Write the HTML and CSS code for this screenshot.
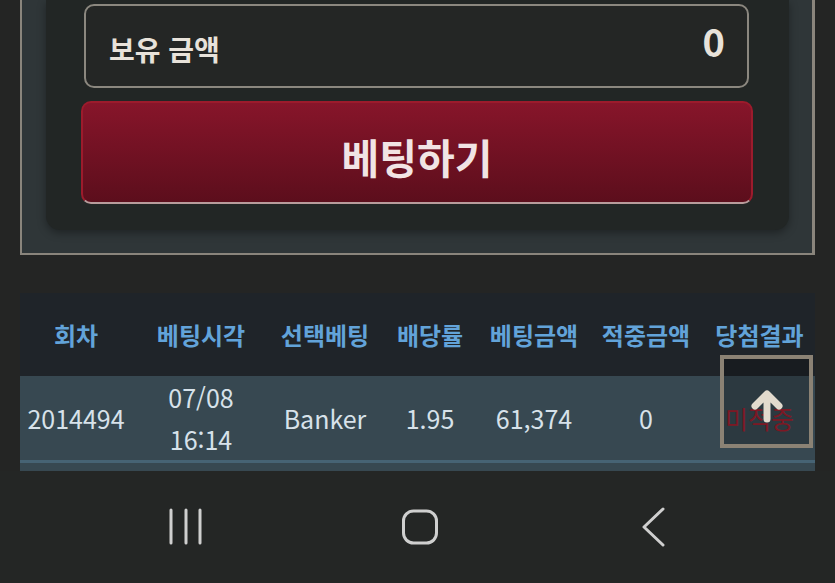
FILE: index.html
```html
<!DOCTYPE html>
<html lang="ko">
<head>
<meta charset="utf-8">
<title>베팅</title>
<link rel="stylesheet" href="styles.css">
</head>
<body>
<div class="screen">
  <main class="content">
    <section class="panel">
      <div class="card">
        <div class="balance">
          <span class="balance-label">보유 금액</span>
          <span class="balance-value">0</span>
        </div>
        <button class="bet-btn" type="button">베팅하기</button>
      </div>
    </section>

    <table class="history">
      <colgroup>
        <col class="c1"><col class="c2"><col class="c3"><col class="c4"><col class="c5"><col class="c6"><col class="c7">
      </colgroup>
      <thead>
        <tr>
          <th>회차</th><th>베팅시각</th><th>선택베팅</th><th>배당률</th><th>베팅금액</th><th>적중금액</th><th>당첨결과</th>
        </tr>
      </thead>
      <tbody>
        <tr>
          <td>2014494</td><td>07/08<br>16:14</td><td>Banker</td><td>1.95</td><td>61,374</td><td>0</td><td class="miss">미적중</td>
        </tr>
        <tr class="next-row">
          <td></td><td></td><td></td><td></td><td></td><td></td><td></td>
        </tr>
      </tbody>
    </table>

    <button class="to-top" type="button" aria-label="맨 위로">
      <svg width="40" height="40" viewBox="0 0 40 40">
        <path d="M20 35 V12 M8 22 L20 10 L32 22" fill="none" stroke="#e2dacd" stroke-width="7" stroke-linecap="round" stroke-linejoin="round"/>
      </svg>
    </button>
  </main>

  <nav class="navbar">
    <span class="nav-slot">
      <svg width="40" height="40" viewBox="0 0 40 40">
        <path d="M5 3 V36 M20 3 V36 M34 3 V36" stroke="#cfcfcf" stroke-width="3" stroke-linecap="round"/>
      </svg>
    </span>
    <span class="nav-slot">
      <svg width="40" height="40" viewBox="0 0 40 40">
        <rect x="3.5" y="4" width="33" height="32" rx="10" fill="none" stroke="#cfcfcf" stroke-width="3"/>
      </svg>
    </span>
    <span class="nav-slot">
      <svg width="40" height="40" viewBox="0 0 40 40">
        <path d="M29 2 L10 20 L29 38" fill="none" stroke="#cfcfcf" stroke-width="3" stroke-linecap="round" stroke-linejoin="round"/>
      </svg>
    </span>
  </nav>
</div>
</body>
</html>
```

FILE: styles.css
```css
* {
  box-sizing: border-box;
}

html, body {
  margin: 0;
  padding: 0;
  background: #242524;
}

body {
  width: 835px;
  height: 583px;
  overflow: hidden;
  font-family: "Noto Sans CJK KR", "Noto Sans", sans-serif;
}

.screen {
  display: flex;
  flex-direction: column;
  height: 583px;
}

.content {
  position: relative;
  height: 471px;
  overflow: hidden;
  padding: 0 20px;
  flex: none;
}

/* outer bordered panel (top is scrolled out of view) */
.panel {
  background: #2f3638;
  border: 2px solid #8a857c;
  border-top: none;
  border-right-width: 3px;
  padding: 0 23px 23px 24px;
}

.card {
  background: #222625;
  border-radius: 0 0 14px 14px;
  box-shadow: 0 3px 8px rgba(0, 0, 0, 0.35);
  padding: 4px 36px 26px 35px;
  display: flex;
  flex-direction: column;
  gap: 13px;
}

.balance {
  height: 84px;
  margin: 0 4px 0 3px;
  border: 2px solid #8b877f;
  border-radius: 10px;
  background: #242625;
  display: flex;
  align-items: center;
  justify-content: space-between;
  padding: 0 22px 0 23px;
  color: #e8e2da;
}

.balance-label {
  font-size: 28px;
  font-weight: 700;
  padding-top: 6px;
}

.balance-value {
  font-size: 38px;
  font-weight: 700;
  padding-bottom: 12px;
}

.bet-btn {
  height: 103px;
  width: 100%;
  border: 2px solid #9c1b2c;
  border-bottom-color: #b89c9c;
  border-radius: 10px;
  background: linear-gradient(#87152a, #5c0e1c);
  color: #f1e4e4;
  font-family: inherit;
  font-size: 41px;
  font-weight: 700;
  padding: 6px 0 0;
  cursor: pointer;
}

/* betting history */
.history {
  margin-top: 38px;
  width: 795px;
  border-collapse: collapse;
  table-layout: fixed;
}

.c1 { width: 112px; }
.c2 { width: 138px; }
.c3 { width: 110px; }
.c4 { width: 100px; }
.c5 { width: 108px; }
.c6 { width: 116px; }
.c7 { width: 111px; }

.history th {
  background: #1f2429;
  color: #62a3d9;
  font-size: 24px;
  font-weight: 700;
  height: 83px;
  padding: 0;
  white-space: nowrap;
}

.history td {
  background: #374851;
  color: #d7e2ea;
  font-size: 25px;
  line-height: 42px;
  height: 84px;
  padding: 0;
  text-align: center;
  white-space: nowrap;
}

.history tbody tr + tr td {
  border-top: 3px solid #466374;
}

.history td.miss {
  color: #9c1f2d;
}

/* floating scroll-to-top control */
.to-top {
  position: absolute;
  left: 720px;
  top: 355px;
  width: 93px;
  height: 93px;
  border: 4px solid #8b8274;
  background: rgba(0, 0, 0, 0.2);
  padding: 0;
  display: flex;
  align-items: flex-start;
  justify-content: center;
  padding-top: 25px;
}

/* system navigation bar */
.navbar {
  flex: 1;
  background: #242625;
  display: flex;
  align-items: center;
  padding-left: 136px;
  gap: 134px;
}

.nav-slot {
  width: 100px;
  height: 40px;
  display: flex;
  justify-content: center;
  align-items: center;
}

.nav-slot svg {
  display: block;
}
```
